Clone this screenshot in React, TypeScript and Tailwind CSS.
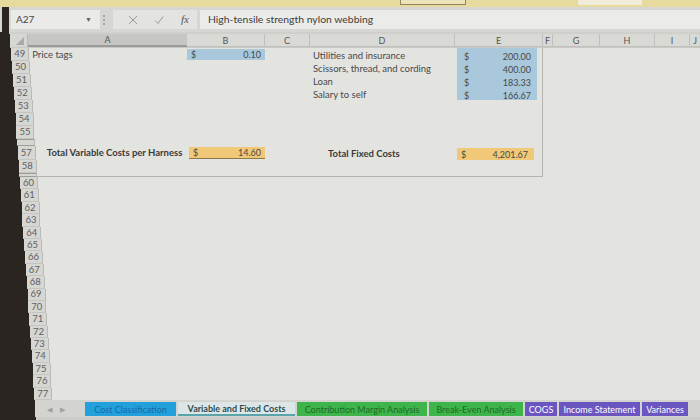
import React from 'react'

type Row = { n?: string; h: number; spacer?: boolean; boxed?: boolean }

const rows: Row[] = [
  ...['49', '50', '51', '52', '53', '54', '55'].map((n) => ({ n, h: 13, boxed: true })),
  { h: 7, spacer: true, boxed: true },
  { n: '57', h: 14, boxed: true },
  { n: '58', h: 13, boxed: true },
  { h: 4, spacer: true, boxed: true },
  ...Array.from({ length: 18 }, (_, i) => ({ n: String(60 + i), h: 12.4 })),
]

// the photo is taken at an angle, the bezel eats more of the left edge further down
const leftAt = (y: number) => Math.max(8, 11 + (y - 50) * 0.068)

const fixedCosts: Record<string, [string, string]> = {
  '49': ['Utilities and insurance', '200.00'],
  '50': ['Scissors, thread, and cording', '400.00'],
  '51': ['Loan', '183.33'],
  '52': ['Salary to self', '166.67'],
}

function Money({ value, tone, className }: { value: string; tone: 'blue' | 'orange'; className?: string }) {
  const bg = tone === 'blue' ? 'bg-[#a9c8dc]' : 'bg-[#f0c877] border-b border-[#8d7a4c]'
  return (
    <div className={`flex h-full items-center justify-between px-[4px] text-[9px] ${bg} ${className ?? ''}`}>
      <span>$</span>
      <span>{value}</span>
    </div>
  )
}

function SheetRow({ row, top }: { row: Row; top: number }) {
  const left = leftAt(top + row.h / 2)
  const fc = row.n ? fixedCosts[row.n] : undefined
  const boxedBorder = row.boxed ? 'border-r border-[#b3b3b0]' : ''
  const last = row.spacer && top > 160
  return (
    <div className="flex shrink-0" style={{ height: row.h }}>
      <div className="shrink-0 bg-[#2a2521]" style={{ width: left }} />
      <div
        className={`flex w-[18px] shrink-0 items-center justify-center border-r border-[#b9b9b6] bg-[#d6d6d3] text-[9.5px] leading-none text-[#606060] ${
          row.spacer ? 'border-y border-y-[#9c9c99]' : 'border-b border-b-[#c4c4c1]'
        }`}
      >
        {row.n}
      </div>
      <div className="flex flex-1 bg-[#e3e3e0] text-[9.5px] leading-none text-[#484848]">
        <div className={`flex ${last ? 'border-b border-[#b3b3b0]' : ''}`}>
          <div className="flex items-center whitespace-nowrap pl-[3px]" style={{ width: 187 - left - 18 }}>
            {row.n === '49' && <span>Price tags</span>}
            {row.n === '57' && <span className="ml-[8px] font-bold text-[#3a3a3a]">Total Variable Costs per Harness</span>}
          </div>
          <div className="w-[78px] py-[1px]">
            {row.n === '49' && <Money value="0.10" tone="blue" />}
            {row.n === '57' && <Money value="14.60" tone="orange" className="ml-[2px]" />}
          </div>
          <div className="w-[45px]" />
          <div className="flex w-[145px] items-center whitespace-nowrap pl-[3px]">
            {fc && <span className="mt-[3px]">{fc[0]}</span>}
            {row.n === '57' && <span className="ml-[15px] mt-[2px] font-bold text-[#3a3a3a]">Total Fixed Costs</span>}
          </div>
          <div className={`w-[88px] pl-[2px] pr-[5px] ${boxedBorder}`}>
            {fc && <Money value={fc[1]} tone="blue" className="pl-[7px] pr-[6px] pt-[3px]" />}
            {row.n === '57' && <Money value="4,201.67" tone="orange" className="mr-[3px] mt-[2px] pr-[6px]" />}
          </div>
        </div>
        <div className="flex-1" />
      </div>
    </div>
  )
}

const tabs = [
  { label: 'Cost Classification', w: 91, cls: 'bg-[#22a0dc] text-[#1a6aa3]' },
  { label: 'Variable and Fixed Costs', w: 117, cls: 'bg-[#dde6e7] text-[#2c4c4d] font-bold border-b-2 border-[#5aa4ab]' },
  { label: 'Contribution Margin Analysis', w: 130, cls: 'bg-[#3db54a] text-[#1d6a26]' },
  { label: 'Break-Even Analysis', w: 94, cls: 'bg-[#3db54a] text-[#1d6a26]' },
  { label: 'COGS', w: 32, cls: 'bg-[#6b55c1] text-white' },
  { label: 'Income Statement', w: 81, cls: 'bg-[#6b55c1] text-white' },
  { label: 'Variances', w: 46, cls: 'bg-[#6b55c1] text-white' },
]

export default function App() {
  let y = 46
  const laid = rows.map((r) => {
    const top = y
    y += r.h
    return { r, top }
  })

  return (
    <div className="flex h-[420px] w-[700px] flex-col overflow-hidden bg-[#2a2521] font-['Lato',sans-serif]">
      {/* ribbon edge */}
      <div className="flex h-[7px] shrink-0 bg-[#e6da9f] pl-[8px]">
        <div className="ml-[392px] h-[5px] w-[66px] border-x border-b border-[#8f8560] bg-[#ece4b8]" />
        <div className="ml-[112px] h-[5px] w-[64px] bg-[#f1ecd8]" />
      </div>

      {/* formula bar */}
      <div className="flex h-[25px] shrink-0 items-center bg-[#d6d6d3] pl-[2px]">
        <div className="h-full w-[7px] shrink-0 bg-[#2a2521]" />
        <div className="ml-[2px] flex h-[19px] w-[89px] items-center justify-between bg-[#eaeae8] pl-[5px] pr-[8px] text-[10px] text-[#444]">
          <span>A27</span>
          <span className="text-[7px] text-[#666]">▼</span>
        </div>
        <div className="ml-[3px] flex flex-col gap-[2px]">
          <span className="h-[2px] w-[2px] bg-[#a5a5a3]" />
          <span className="h-[2px] w-[2px] bg-[#a5a5a3]" />
          <span className="h-[2px] w-[2px] bg-[#a5a5a3]" />
        </div>
        <div className="ml-[8px] flex h-[19px] w-[84px] items-center bg-[#e3e3e1] text-[#9a9a98]">
          <svg className="ml-[15px]" width="10" height="10" viewBox="0 0 10 10" fill="none" stroke="currentColor" strokeWidth="1">
            <path d="M1 1l8 8M9 1l-8 8" />
          </svg>
          <svg className="ml-[16px]" width="10" height="10" viewBox="0 0 10 10" fill="none" stroke="currentColor" strokeWidth="1">
            <path d="M1 5.5l3 3 5-7" />
          </svg>
          <span className="ml-[17px] font-['Liberation_Serif',serif] text-[11px] italic text-[#555]">fx</span>
        </div>
        <div className="ml-[3px] flex h-[19px] flex-1 items-center bg-[#ebebe9] pl-[8px] text-[10.4px] text-[#3c3c3c]">
          High-tensile strength nylon webbing
        </div>
      </div>

      <div className="ml-[9px] h-[2px] shrink-0 bg-[#cfcfcc]" />

      {/* column headers */}
      <div className="flex h-[13px] shrink-0 text-[9px] leading-none text-[#555]">
        <div className="w-[10px] shrink-0 bg-[#2a2521]" />
        <div className="relative w-[18px] shrink-0 border-r border-[#b9b9b6] bg-[#d6d6d3]">
          <svg className="absolute bottom-[2px] right-[3px]" width="8" height="8" viewBox="0 0 8 8">
            <path d="M8 0v8H0z" fill="#aaaaa8" />
          </svg>
        </div>
        <div className="flex w-[159px] items-center justify-center border-b-2 border-[#9a9a97] bg-[#c6c6c3]">A</div>
        {[
          ['B', 78],
          ['C', 45],
          ['D', 145],
          ['E', 88],
          ['F', 10],
          ['G', 47],
          ['H', 55],
          ['I', 35],
        ].map(([l, w]) => (
          <div
            key={l}
            className="flex items-center justify-center border-r border-b border-[#c0c0bd] bg-[#d9d9d6]"
            style={{ width: w as number }}
          >
            {l}
          </div>
        ))}
        <div className="flex flex-1 items-center justify-end border-b border-[#c0c0bd] bg-[#d9d9d6] pr-[3px]">J</div>
      </div>
      <div className="ml-[10px] h-px shrink-0 bg-[#c8c8c5]" />

      {laid.map(({ r, top }, i) => (
        <SheetRow key={i} row={r} top={top} />
      ))}

      {/* sheet tabs */}
      <div className="flex h-[17px] shrink-0">
        <div className="w-[35px] shrink-0 bg-[#2a2521]" />
        <div className="flex flex-1 items-center bg-[#d3d3d0] pt-[1px] text-[9px] leading-none">
          <span className="ml-[12px] text-[7px] text-[#a0a09e]">◀</span>
          <span className="ml-[8px] text-[7px] text-[#a0a09e]">▶</span>
          <div className="ml-[20px] flex h-[14px] gap-[2px]">
            {tabs.map((t) => (
              <div key={t.label} className={`flex shrink-0 items-center justify-center whitespace-nowrap ${t.cls}`} style={{ width: t.w }}>
                {t.label}
              </div>
            ))}
          </div>
        </div>
      </div>
      <div className="ml-[36px] flex-1 bg-[#cdcdca]" />
    </div>
  )
}
